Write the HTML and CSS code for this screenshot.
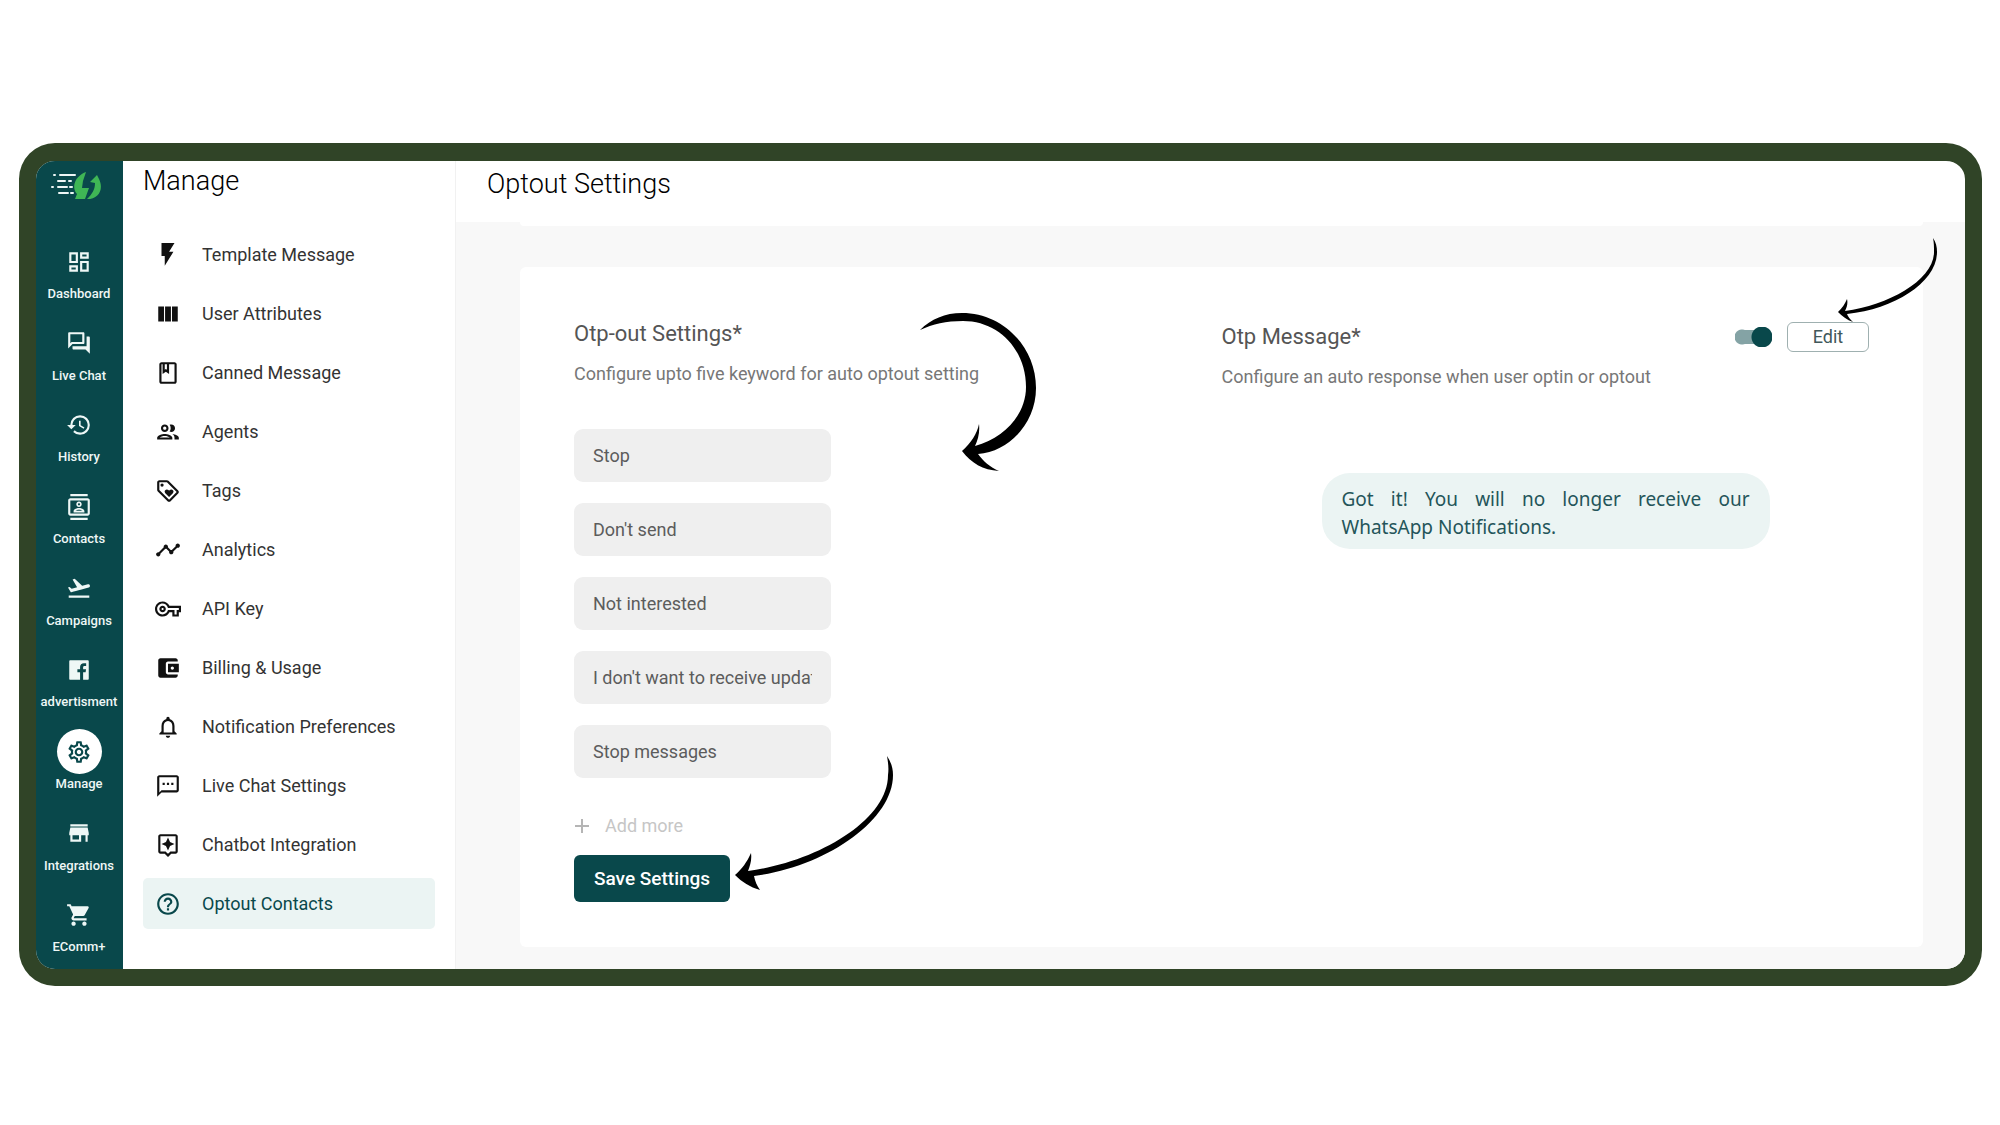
FILE: index.html
```html
<!DOCTYPE html>
<html lang="en">
  <head>
    <meta charset="UTF-8" />
    <title>Optout Settings</title>
    <link rel="stylesheet" href="styles.css">
  </head>
  <body>
    <div class="frame">
      <nav class="rail">
        <div class="rail-logo">
          <svg class="logo" viewBox="0 0 52 30">
            <g stroke="#eef7f6" stroke-width="2" stroke-linecap="round">
              <path d="M4 4h1M10 4h15M8 10h7M19 10h2M2 16h1M8 16h9M20 16h2M9 22h9M21 22h2" />
            </g>
            <path fill="#3fb655" d="M36 1C25 5 21 16 27 23l-2 5h10l4-11h-7l1-7z" />
            <path fill="#3fb655" d="M47 4 40 11l5 1c0 7-3 11-8 16 12 0 17-10 12-20z" />
          </svg>
        </div>
        <a class="rail-item" href="#">
          <span class="rail-icon"><svg class="icon" viewBox="0 0 24 24"><path d="M19 5v2h-4V5h4M9 5v6H5V5h4m10 8v6h-4v-6h4M9 17v2H5v-2h4M21 3h-8v6h8V3zM11 3H3v10h8V3zm10 8h-8v10h8V11zm-10 4H3v6h8v-6z" /></svg></span>
          Dashboard
        </a>
        <a class="rail-item" href="#">
          <span class="rail-icon"><svg class="icon" viewBox="0 0 24 24"><path d="M15 4v7H5.17L4 12.17V4h11m1-2H3c-.55 0-1 .45-1 1v14l4-4h10c.55 0 1-.45 1-1V3c0-.55-.45-1-1-1zm5 4h-2v9H6v2c0 .55.45 1 1 1h11l4 4V7c0-.55-.45-1-1-1z" /></svg></span>
          Live Chat
        </a>
        <a class="rail-item" href="#">
          <span class="rail-icon"><svg class="icon" viewBox="0 0 24 24"><path d="M13 3a9 9 0 0 0-9 9H1l3.89 3.89.07.14L9 12H6c0-3.87 3.13-7 7-7s7 3.13 7 7-3.13 7-7 7c-1.93 0-3.68-.79-4.94-2.06l-1.42 1.42A8.954 8.954 0 0 0 13 21a9 9 0 0 0 0-18zm-1 5v5l4.28 2.54.72-1.21-3.5-2.08V8H12z" /></svg></span>
          History
        </a>
        <a class="rail-item" href="#">
          <span class="rail-icon"><svg class="icon" viewBox="0 0 24 24"><path d="M20 4H4c-1.1 0-2 .9-2 2v12c0 1.1.9 2 2 2h16c1.1 0 2-.9 2-2V6c0-1.1-.9-2-2-2zm0 14H4V6h16v12zM4 0h16v2H4zm0 22h16v2H4zm8-10c1.38 0 2.5-1.12 2.5-2.5S13.38 7 12 7 9.5 8.12 9.5 9.5 10.62 12 12 12zm0-3.5c.55 0 1 .45 1 1s-.45 1-1 1-1-.45-1-1 .45-1 1-1zm5 7.49C17 13.9 13.69 13 12 13s-5 .9-5 2.99V17h10v-1.01zm-8.19-.49c.61-.52 2.03-1 3.19-1 1.17 0 2.59.48 3.2 1H8.81z" /></svg></span>
          Contacts
        </a>
        <a class="rail-item" href="#">
          <span class="rail-icon"><svg class="icon" viewBox="0 0 24 24"><path d="M2.5 19h19v2h-19zm19.57-9.36c-.21-.8-1.04-1.28-1.84-1.06L14.92 10l-6.9-6.43-1.93.51 4.14 7.17-4.97 1.33-1.97-1.54-1.45.39 2.59 4.49s7.12-1.9 16.57-4.43c.81-.23 1.28-1.05 1.07-1.85z" /></svg></span>
          Campaigns
        </a>
        <a class="rail-item" href="#">
          <span class="rail-icon"><svg class="icon" viewBox="0 0 24 24"><path d="M20 3H4c-.6 0-1 .4-1 1v16c0 .6.4 1 1 1h9v-7h-2.5v-2.7H13V9.3c0-2.3 1.4-3.6 3.5-3.6h2.1v2.5h-1.4c-1.1 0-1.4.5-1.4 1.3v1.8h2.7l-.4 2.7h-2.3v7H20c.6 0 1-.4 1-1V4c0-.6-.4-1-1-1z" /></svg></span>
          advertisment
        </a>
        <a class="rail-item active" href="#">
          <span class="rail-icon"><svg class="icon" viewBox="0 0 24 24"><path d="M19.43 12.98c.04-.32.07-.64.07-.98 0-.34-.03-.66-.07-.98l2.11-1.65c.19-.15.24-.42.12-.64l-2-3.46c-.09-.16-.26-.25-.44-.25-.06 0-.12.01-.17.03l-2.49 1c-.52-.4-1.08-.73-1.69-.98l-.38-2.65C14.46 2.18 14.25 2 14 2h-4c-.25 0-.46.18-.49.42l-.38 2.65c-.61.25-1.17.59-1.69.98l-2.49-1c-.06-.02-.12-.03-.18-.03-.17 0-.34.09-.43.25l-2 3.46c-.13.22-.07.49.12.64l2.11 1.65c-.04.32-.07.65-.07.98 0 .33.03.66.07.98l-2.11 1.65c-.19.15-.24.42-.12.64l2 3.46c.09.16.26.25.44.25.06 0 .12-.01.17-.03l2.49-1c.52.4 1.08.73 1.69.98l.38 2.65c.03.24.24.42.49.42h4c.25 0 .46-.18.49-.42l.38-2.65c.61-.25 1.17-.59 1.69-.98l2.49 1c.06.02.12.03.18.03.17 0 .34-.09.43-.25l2-3.46c.12-.22.07-.49-.12-.64l-2.11-1.65zm-1.98-1.71c.04.31.05.52.05.73 0 .21-.02.43-.05.73l-.14 1.13.89.7 1.08.84-.7 1.21-1.27-.51-1.04-.42-.9.68c-.43.32-.84.56-1.25.73l-1.06.43-.16 1.13-.2 1.35h-1.4l-.19-1.35-.16-1.13-1.06-.43c-.43-.18-.83-.41-1.23-.71l-.91-.7-1.06.43-1.27.51-.7-1.21 1.08-.84.89-.7-.14-1.13c-.03-.31-.05-.54-.05-.74s.02-.43.05-.73l.14-1.13-.89-.7-1.08-.84.7-1.21 1.27.51 1.04.42.9-.68c.43-.32.84-.56 1.25-.73l1.06-.43.16-1.13.2-1.35h1.39l.19 1.35.16 1.13 1.06.43c.43.18.83.41 1.23.71l.91.7 1.06-.43 1.27-.51.7 1.21-1.07.85-.89.7.14 1.13zM12 8c-2.21 0-4 1.79-4 4s1.79 4 4 4 4-1.79 4-4-1.79-4-4-4zm0 6c-1.1 0-2-.9-2-2s.9-2 2-2 2 .9 2 2-.9 2-2 2z" /></svg></span>
          Manage
        </a>
        <a class="rail-item" href="#">
          <span class="rail-icon"><svg class="icon" viewBox="0 0 24 24"><path d="M20 4H4v2h16V4zm1 10v-2l-1-5H4l-1 5v2h1v6h10v-6h4v6h2v-6h1zm-9 4H6v-4h6v4z" /></svg></span>
          Integrations
        </a>
        <a class="rail-item" href="#">
          <span class="rail-icon"><svg class="icon" viewBox="0 0 24 24"><path d="M7 18c-1.1 0-1.99.9-1.99 2S5.9 22 7 22s2-.9 2-2-.9-2-2-2zM1 2v2h2l3.6 7.59-1.35 2.45c-.16.28-.25.61-.25.96 0 1.1.9 2 2 2h12v-2H7.42c-.14 0-.25-.11-.25-.25l.03-.12.9-1.63h7.45c.75 0 1.41-.41 1.75-1.03l3.58-6.49A1.003 1.003 0 0 0 20 4H5.21l-.94-2H1zm16 16c-1.1 0-1.99.9-1.99 2s.89 2 1.99 2 2-.9 2-2-.9-2-2-2z" /></svg></span>
          EComm+
        </a>
      </nav>

      <aside class="sidebar">
        <h2 class="sidebar-title">Manage</h2>
        <nav class="menu">
          <a class="menu-item" href="#">
            <svg class="icon" viewBox="0 0 24 24"><path d="M6 1v12h3v9l8-13h-4l5-8z" /></svg>
            Template Message
          </a>
          <a class="menu-item" href="#">
            <svg class="icon" viewBox="0 0 24 24"><path d="M3 5h5.3v14H3zM9.3 5h5.4v14H9.3zM15.7 5H21v14h-5.3z" /></svg>
            User Attributes
          </a>
          <a class="menu-item" href="#">
            <svg class="icon" viewBox="0 0 24 24"><path d="M18 2H6c-1.1 0-2 .9-2 2v16c0 1.1.9 2 2 2h12c1.1 0 2-.9 2-2V4c0-1.1-.9-2-2-2zM9 4h2v5l-1-.75L9 9V4zm9 16H6V4h1v9l3-2.25L13 13V4h5v16z" /></svg>
            Canned Message
          </a>
          <a class="menu-item" href="#">
            <svg class="icon" viewBox="0 0 24 24"><path d="M9 13.75c-2.34 0-7 1.17-7 3.5V19h14v-1.75c0-2.33-4.66-3.5-7-3.5zM4.34 17c.84-.58 2.87-1.25 4.66-1.25s3.82.67 4.66 1.25H4.34zM9 12c1.93 0 3.5-1.57 3.5-3.5S10.93 5 9 5 5.5 6.57 5.5 8.5 7.07 12 9 12zm0-5c.83 0 1.5.67 1.5 1.5S9.83 10 9 10s-1.5-.67-1.5-1.5S8.17 7 9 7zm7.04 6.81c1.16.84 1.96 1.96 1.96 3.44V19h4v-1.75c0-2.02-3.5-3.17-5.96-3.44zM15 12c1.93 0 3.5-1.57 3.5-3.5S16.93 5 15 5c-.54 0-1.04.13-1.5.35.63.89 1 1.98 1 3.15s-.37 2.26-1 3.15c.46.22.96.35 1.5.35z" /></svg>
            Agents
          </a>
          <a class="menu-item" href="#">
            <svg class="icon" viewBox="0 0 24 24"><path d="M21.41 11.58l-9-9C12.05 2.22 11.55 2 11 2H4c-1.1 0-2 .9-2 2v7c0 .55.22 1.05.59 1.42l9 9c.36.36.86.58 1.41.58s1.05-.22 1.41-.59l7-7c.37-.36.59-.86.59-1.41s-.23-1.06-.59-1.42zM13 20.01L4 11V4h7v-.01l9 9-7 7.02z" /><circle cx="6.5" cy="6.5" r="1.5" /><path d="M8.9 12.55c0 .57.23 1.07.6 1.45l3.5 3.5 3.5-3.5c.37-.37.6-.89.6-1.45 0-1.13-.92-2.05-2.05-2.05-.57 0-1.08.23-1.45.6l-.6.6-.6-.59c-.37-.38-.89-.61-1.45-.61-1.13 0-2.05.92-2.05 2.05z" /></svg>
            Tags
          </a>
          <a class="menu-item" href="#">
            <svg class="icon" viewBox="0 0 24 24"><path d="M23 8c0 1.1-.9 2-2 2-.18 0-.35-.02-.51-.07l-3.56 3.55c.05.16.07.34.07.52 0 1.1-.9 2-2 2s-2-.9-2-2c0-.18.02-.36.07-.52l-2.55-2.55c-.16.05-.34.07-.52.07s-.36-.02-.52-.07l-4.55 4.56c.05.16.07.33.07.51 0 1.1-.9 2-2 2s-2-.9-2-2 .9-2 2-2c.18 0 .35.02.51.07l4.56-4.55C8.02 9.36 8 9.18 8 9c0-1.1.9-2 2-2s2 .9 2 2c0 .18-.02.36-.07.52l2.55 2.55c.16-.05.34-.07.52-.07s.36.02.52.07l3.55-3.56C19.02 8.35 19 8.18 19 8c0-1.1.9-2 2-2s2 .9 2 2z" /></svg>
            Analytics
          </a>
          <a class="menu-item" href="#">
            <svg class="icon" viewBox="0 0 24 24"><path d="M22 19h-6v-4h-2.68c-1.14 2.42-3.6 4-6.32 4-3.86 0-7-3.14-7-7s3.14-7 7-7c2.72 0 5.17 1.58 6.32 4H24v6h-2v4zm-4-2h2v-4h2v-2H11.94l-.23-.67C11.01 8.34 9.11 7 7 7c-2.76 0-5 2.24-5 5s2.24 5 5 5c2.11 0 4.01-1.34 4.71-3.33l.23-.67H18v4zM7 15c-1.65 0-3-1.35-3-3s1.35-3 3-3 3 1.35 3 3-1.35 3-3 3zm0-4c-.55 0-1 .45-1 1s.45 1 1 1 1-.45 1-1-.45-1-1-1z" /></svg>
            API Key
          </a>
          <a class="menu-item" href="#">
            <svg class="icon" viewBox="0 0 24 24"><path d="M21 18v1c0 1.1-.9 2-2 2H5c-1.11 0-2-.9-2-2V5c0-1.1.89-2 2-2h14c1.1 0 2 .9 2 2v1h-9c-1.11 0-2 .9-2 2v8c0 1.1.89 2 2 2h9zm-9-2h10V8H12v8zm4-2.5c-.83 0-1.5-.67-1.5-1.5s.67-1.5 1.5-1.5 1.5.67 1.5 1.5-.67 1.5-1.5 1.5z" /></svg>
            Billing &amp; Usage
          </a>
          <a class="menu-item" href="#">
            <svg class="icon" viewBox="0 0 24 24"><path d="M12 22c1.1 0 2-.9 2-2h-4c0 1.1.89 2 2 2zm6-6v-5c0-3.07-1.63-5.64-4.5-6.32V4c0-.83-.67-1.5-1.5-1.5s-1.5.67-1.5 1.5v.68C7.64 5.36 6 7.92 6 11v5l-2 2v1h16v-1l-2-2zm-2 1H8v-6c0-2.48 1.51-4.5 4-4.5s4 2.02 4 4.5v6z" /></svg>
            Notification Preferences
          </a>
          <a class="menu-item" href="#">
            <svg class="icon" viewBox="0 0 24 24"><path d="M20 2H4c-1.1 0-2 .9-2 2v18l4-4h14c1.1 0 2-.9 2-2V4c0-1.1-.9-2-2-2zm0 14H6l-2 2V4h16v12zM7 9h2v2H7zm4 0h2v2h-2zm4 0h2v2h-2z" /></svg>
            Live Chat Settings
          </a>
          <a class="menu-item" href="#">
            <svg class="icon" viewBox="0 0 24 24"><path d="M19 2H5c-1.11 0-2 .9-2 2v14c0 1.1.89 2 2 2h4l3 3 3-3h4c1.1 0 2-.9 2-2V4c0-1.1-.9-2-2-2zm0 16h-4.83l-.59.59L12 20.17l-1.59-1.59-.58-.58H5V4h14v14zM12 17l1.88-4.12L18 11l-4.12-1.88L12 5l-1.88 4.12L6 11l4.12 1.88z" /></svg>
            Chatbot Integration
          </a>
          <a class="menu-item active" href="#">
            <svg class="icon" viewBox="0 0 24 24"><path d="M11 18h2v-2h-2v2zm1-16C6.48 2 2 6.48 2 12s4.48 10 10 10 10-4.48 10-10S17.52 2 12 2zm0 18c-4.41 0-8-3.59-8-8s3.59-8 8-8 8 3.59 8 8-3.59 8-8 8zm0-14c-2.21 0-4 1.79-4 4h2c0-1.1.9-2 2-2s2 .9 2 2c0 2-3 1.75-3 5h2c0-2.25 3-2.5 3-5 0-2.21-1.79-4-4-4z" /></svg>
            Optout Contacts
          </a>
        </nav>
      </aside>

      <main class="content">
        <header class="page-header">
          <h1 class="page-title">Optout Settings</h1>
        </header>
        <div class="panels">
          <!-- bottom edge of the panel scrolled out above -->
          <div class="panel-above"></div>
          <div class="card">
            <form class="keywords">
              <h3 class="card-title">Otp-out Settings*</h3>
              <p class="card-text">Configure upto five keyword for auto optout setting</p>
              <div class="fields">
                <input class="field" type="text" aria-label="Keyword 1" value="Stop" />
                <input class="field" type="text" aria-label="Keyword 2" value="Don't send" />
                <input class="field" type="text" aria-label="Keyword 3" value="Not interested" />
                <input class="field" type="text" aria-label="Keyword 4" value="I don't want to receive updates" />
                <input class="field" type="text" aria-label="Keyword 5" value="Stop messages" />
              </div>
              <button class="btn-add" type="button" disabled>
                <svg class="plus" viewBox="0 0 16 16"><path d="M8 1v14M1 8h14" /></svg>
                Add more
              </button>
              <button class="btn-save" type="button">Save Settings</button>
            </form>

            <section class="message">
              <div class="message-head">
                <h3 class="card-title">Otp Message*</h3>
                <div class="message-actions">
                  <input class="toggle" type="checkbox" aria-label="Otp Message" checked />
                  <button class="btn-edit" type="button">Edit</button>
                </div>
              </div>
              <p class="card-text">Configure an auto response when user optin or optout</p>
              <p class="bubble">Got it! You will no longer receive our WhatsApp Notifications.</p>
            </section>

            <svg class="arrow arrow-keywords" viewBox="0 0 118 160">
              <path d="M1 18C12 7 26 1 43 1c41 0 74 34 74 75 0 34-26 64-58 66 5 7 12 13 21 17-16-1-28-8-37-20 9-8 15-17 17-27 1 8-1 16-4 22 30-8 51-32 51-59 0-37-27-66-63-66-17 0-30 3-43 9z" />
            </svg>
            <svg class="arrow arrow-save" viewBox="0 0 160 136">
              <path d="M153 1c4 6 6 12 6 19 0 46-68 92-139 101 1 5 3 10 6 14-10-3-18-8-25-15 7-6 12-13 16-22 1 7-1 13-3 18 68-9 140-50 140-96 1-7 0-13-1-19z" />
            </svg>
            <svg class="arrow arrow-edit" viewBox="0 0 100 84">
              <path d="M95 0c3 4 4 9 4 14 0 30-42 57-90 62 1 3 3 5 6 8C9 82 4 78 0 74c4-4 7-8 9-13 1 4 0 8-2 12 44-6 89-31 89-59 0-5 0-9-1-14z" />
            </svg>
          </div>
        </div>
      </main>
    </div>
  </body>
</html>
```
FILE: styles.css
```css
* {
  box-sizing: border-box;
}

body {
  margin: 0;
  min-height: 100vh;
  padding: 143px 18px 139px 19px;
  display: flex;
  font-family: Roboto, sans-serif;
  background: #fff;
}

.frame {
  flex: 1;
  display: flex;
  border: 17px solid #304427;
  border-top-width: 18px;
  border-radius: 36px;
  overflow: hidden;
  background: #fff;
}

h1,
h2,
h3,
p {
  margin: 0;
  font-weight: 400;
}

.icon {
  width: 26px;
  height: 26px;
  fill: currentColor;
  flex-shrink: 0;
}

/* dark navigation rail */
.rail {
  width: 87px;
  flex-shrink: 0;
  display: flex;
  flex-direction: column;
  padding-right: 1px;
  background: #09484b;
}

.rail-logo {
  height: 73px;
  padding: 10px 0 0 14px;
}

.logo {
  display: block;
  width: 52px;
  height: 30px;
}

.rail-item {
  flex: 1;
  display: flex;
  flex-direction: column;
  align-items: center;
  padding-top: 5px;
  font-size: 13px;
  font-weight: 500;
  line-height: 20px;
  color: #eef7f6;
  text-decoration: none;
}

.rail-icon {
  width: 45px;
  height: 45px;
  display: flex;
  align-items: center;
  justify-content: center;
  border-radius: 50%;
}

.rail-item.active .rail-icon {
  background: #fff;
  color: #09484b;
}

/* manage menu */
.sidebar {
  width: 333px;
  flex-shrink: 0;
  padding: 4px 20px 40px;
  border-right: 1px solid #f1f1f1;
}

.sidebar-title {
  height: 64px;
  font-size: 27px;
  font-weight: 300;
  line-height: 32px;
  color: #000;
}

.menu {
  display: flex;
  flex-direction: column;
  gap: 8px;
}

.menu-item {
  height: 51px;
  display: flex;
  align-items: center;
  gap: 21px;
  padding: 0 12px;
  border-radius: 5px;
  font-size: 18px;
  color: #333;
  text-decoration: none;
}

.menu-item .icon {
  color: #111;
}

.menu-item.active,
.menu-item.active .icon {
  color: #09484b;
}

.menu-item.active {
  background: #ebf4f3;
}

/* page */
.content {
  flex: 1;
  display: flex;
  flex-direction: column;
}

.page-header {
  height: 61px;
  padding: 7px 31px;
}

.page-title {
  font-size: 27px;
  font-weight: 300;
  line-height: 32px;
  color: #000;
}

.panels {
  flex: 1;
  display: flex;
  flex-direction: column;
  padding: 0 42px 22px 64px;
  background: #f8f8f8;
}

.panel-above {
  height: 4px;
  margin-bottom: 41px;
  border-radius: 0 0 6px 6px;
  background: #fff;
}

.card {
  position: relative;
  flex: 1;
  display: grid;
  grid-template-columns: 1fr 1fr;
  padding: 52px 54px 45px;
  border-radius: 6px;
  background: #fff;
}

.keywords {
  display: flex;
  flex-direction: column;
  align-items: flex-start;
}

.card-title {
  font-size: 22px;
  line-height: 30px;
  color: #555;
}

.card-text {
  margin-top: 10px;
  font-size: 18px;
  line-height: 30px;
  color: #777;
}

.fields {
  display: flex;
  flex-direction: column;
  gap: 21px;
  margin: 40px 0 33px;
}

.field {
  width: 257px;
  height: 53px;
  padding: 0 19px;
  border: none;
  border-radius: 9px;
  font-family: inherit;
  font-size: 18px;
  color: #5c5c5c;
  background: #efefef;
}

.btn-add {
  display: flex;
  align-items: center;
  gap: 15px;
  padding: 0;
  border: none;
  font-family: inherit;
  font-size: 18px;
  line-height: 30px;
  color: #c6c6c6;
  background: none;
}

.plus {
  width: 16px;
  height: 16px;
  stroke: #b5b5b5;
  stroke-width: 2;
}

.btn-save {
  height: 47px;
  margin-top: 14px;
  padding: 0 20px;
  border: none;
  border-radius: 6px;
  font-family: inherit;
  font-size: 19px;
  font-weight: 500;
  color: #fff;
  background: #09484b;
}

.message {
  padding-top: 3px;
}

.message-head {
  display: flex;
  align-items: center;
  justify-content: space-between;
}

.message-actions {
  display: flex;
  align-items: center;
  gap: 15px;
}

.toggle {
  appearance: none;
  width: 37px;
  height: 20px;
  margin: 0;
  background:
    radial-gradient(circle at 27px 10px, #09484b 10px, transparent 11px),
    linear-gradient(#84a3a5, #84a3a5) 10px 3px / 20px 14px no-repeat,
    radial-gradient(circle at 7px 10px, #84a3a5 7px, transparent 8px);
}

.btn-edit {
  width: 82px;
  height: 30px;
  padding: 0 0 2px;
  border: 1px solid #9fb0b0;
  border-radius: 6px;
  font-family: inherit;
  font-size: 18px;
  color: #41585b;
  background: #fff;
}

.bubble {
  width: 448px;
  margin: 81px auto 0 100px;
  padding: 12px 20px 8px;
  border-radius: 28px;
  font-family: "Noto Sans", sans-serif;
  font-size: 19px;
  line-height: 28px;
  text-align: justify;
  color: #24555a;
  background: #ebf4f3;
}

/* hand-drawn pointers over the card */
.arrow {
  position: absolute;
}

.arrow-keywords {
  left: 399px;
  top: 45px;
  width: 118px;
  height: 160px;
}

.arrow-save {
  left: 214px;
  bottom: 56px;
  width: 160px;
  height: 136px;
}

.arrow-edit {
  right: -15px;
  top: -29px;
  width: 100px;
  height: 84px;
}
```
